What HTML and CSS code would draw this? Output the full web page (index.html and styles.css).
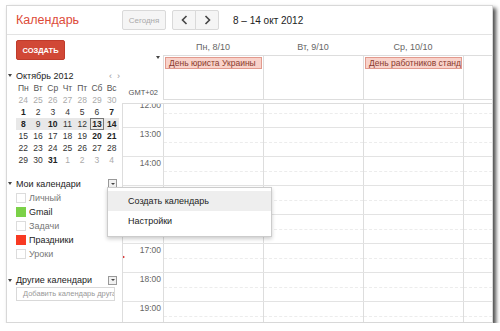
FILE: index.html
```html
<!DOCTYPE html>
<html lang="ru">
<head>
  <meta charset="UTF-8">
  <title>Календарь</title>
  <link rel="stylesheet" href="styles.css">
</head>
<body>
  <div class="window">
    <header class="topbar">
      <div class="brand">Календарь</div>
      <button class="btn today">Сегодня</button>
      <div class="nav">
        <button class="btn"><svg width="7" height="10" viewBox="0 0 7 10"><path d="M5.5 1 L1.5 5 L5.5 9" fill="none" stroke="#444" stroke-width="1.6"/></svg></button>
        <button class="btn"><svg width="7" height="10" viewBox="0 0 7 10"><path d="M1.5 1 L5.5 5 L1.5 9" fill="none" stroke="#444" stroke-width="1.6"/></svg></button>
      </div>
      <div class="range">8 – 14 окт 2012</div>
    </header>

    <div class="main">
      <aside class="sidebar">
        <button class="create">СОЗДАТЬ</button>

        <div class="mini-head">
          <span class="tri"></span>
          <span class="month">Октябрь 2012</span>
          <span class="arrows">‹ &nbsp;›</span>
        </div>
        <div class="mini-grid">
          <div class="dn">Пн</div><div class="dn">Вт</div><div class="dn">Ср</div><div class="dn">Чт</div><div class="dn">Пт</div><div class="dn">Сб</div><div class="dn">Вс</div>
          <div class="off">24</div><div class="off">25</div><div class="off">26</div><div class="off">27</div><div class="off">28</div><div class="off">29</div><div class="off">30</div>
          <div class="b">1</div><div>2</div><div>3</div><div>4</div><div>5</div><div>6</div><div class="b">7</div>
          <div class="wk b">8</div><div class="wk">9</div><div class="wk b">10</div><div class="wk">11</div><div class="wk">12</div><div class="wk b now">13</div><div class="wk b">14</div>
          <div>15</div><div>16</div><div>17</div><div>18</div><div>19</div><div class="b">20</div><div class="b">21</div>
          <div>22</div><div>23</div><div>24</div><div>25</div><div>26</div><div>27</div><div>28</div>
          <div>29</div><div>30</div><div class="b">31</div><div class="off">1</div><div class="off">2</div><div class="off">3</div><div class="off">4</div>
        </div>

        <div class="sec-head my">
          <span class="tri"></span>
          <span class="sec-title">Мои календари</span>
          <span class="dd"></span>
        </div>
        <ul class="cals">
          <li class="muted"><span class="box"></span>Личный</li>
          <li><span class="box green"></span>Gmail</li>
          <li class="muted"><span class="box"></span>Задачи</li>
          <li><span class="box red"></span>Праздники</li>
          <li class="muted"><span class="box"></span>Уроки</li>
        </ul>

        <div class="sec-head other">
          <span class="tri"></span>
          <span class="sec-title">Другие календари</span>
          <span class="dd"></span>
        </div>
        <div class="add">Добавить календарь друга</div>
      </aside>

      <section class="cal">
        <div class="dayhead">
          <div class="gut"></div>
          <div class="dl">Пн, 8/10</div>
          <div class="dl">Вт, 9/10</div>
          <div class="dl">Ср, 10/10</div>
          <div class="dl"></div>
        </div>
        <div class="allday">
          <div class="gut">
            <span class="tri"></span>
            <span class="tz">GMT+02</span>
          </div>
          <div class="cells">
            <div class="cell"><div class="chip">День юриста Украины</div></div>
            <div class="cell"></div>
            <div class="cell"><div class="chip">День работников стандартизации</div></div>
            <div class="cell"></div>
          </div>
        </div>
        <div class="scroll">
          <div class="hours">
            <div class="hour"><div class="t">12:00</div><div class="c"><i></i></div><div class="c"><i></i></div><div class="c"><i></i></div><div class="c"><i></i></div></div>
            <div class="hour"><div class="t">13:00</div><div class="c"><i></i></div><div class="c"><i></i></div><div class="c"><i></i></div><div class="c"><i></i></div></div>
            <div class="hour"><div class="t">14:00</div><div class="c"><i></i></div><div class="c"><i></i></div><div class="c"><i></i></div><div class="c"><i></i></div></div>
            <div class="hour"><div class="t"></div><div class="c"><i></i></div><div class="c"><i></i></div><div class="c"><i></i></div><div class="c"><i></i></div></div>
            <div class="hour"><div class="t"></div><div class="c"><i></i></div><div class="c"><i></i></div><div class="c"><i></i></div><div class="c"><i></i></div></div>
            <div class="hour"><span class="marker"></span><div class="t">17:00</div><div class="c"><i></i></div><div class="c"><i></i></div><div class="c"><i></i></div><div class="c"><i></i></div></div>
            <div class="hour"><div class="t">18:00</div><div class="c"><i></i></div><div class="c"><i></i></div><div class="c"><i></i></div><div class="c"><i></i></div></div>
            <div class="hour"><div class="t">19:00</div><div class="c"><i></i></div><div class="c"><i></i></div><div class="c"><i></i></div><div class="c"><i></i></div></div>
          </div>
        </div>
      </section>
    </div>

    <div class="menu">
      <div class="item active">Создать календарь</div>
      <div class="item">Настройки</div>
    </div>
  </div>
</body>
</html>
```

FILE: styles.css
```css
body {
  margin: 0;
  padding: 5px 0 0 6px;
  font-family: 'Liberation Sans', Arial, sans-serif;
  background: #fff;
  color: #333;
}

.window {
  position: relative;
  width: 487px;
  height: 318px;
  box-sizing: border-box;
  border: 1px solid #d8d8d8;
  background: #fff;
  box-shadow: 3px 3px 4px rgba(0, 0, 0, 0.7);
  display: flex;
  flex-direction: column;
  overflow: hidden;
}

/* top bar */
.topbar {
  display: flex;
  align-items: center;
  height: 28px;
  flex-shrink: 0;
  border-bottom: 1px solid #e3e3e3;
}

.brand {
  width: 115px;
  box-sizing: border-box;
  padding-left: 9px;
  font-size: 12.5px;
  color: #dd4b39;
}

.btn {
  height: 20px;
  margin: 0;
  padding: 0;
  border: 1px solid #d9d9d9;
  border-radius: 2px;
  background: #f5f5f5;
  font-family: inherit;
  display: flex;
  align-items: center;
  justify-content: center;
}

.today {
  width: 44px;
  font-size: 8px;
  color: #aaa;
}

.nav {
  display: flex;
  margin-left: 6px;
}

.nav .btn {
  width: 24px;
}

.nav .btn:first-child {
  border-radius: 2px 0 0 2px;
}

.nav .btn:last-child {
  border-radius: 0 2px 2px 0;
  margin-left: -1px;
}

.range {
  margin-left: 14px;
  font-size: 10px;
  color: #222;
}

.main {
  display: flex;
  flex: 1;
  min-height: 0;
}

/* sidebar */
.sidebar {
  width: 115px;
  flex-shrink: 0;
  font-size: 9px;
}

.create {
  display: block;
  width: 49px;
  height: 20px;
  margin: 5px 0 0 9px;
  padding: 0;
  border: 1px solid #c03b2b;
  border-radius: 2px;
  background: #d14836;
  color: #fff;
  font-family: inherit;
  font-size: 7.5px;
  font-weight: bold;
}

.tri {
  display: inline-block;
  width: 0;
  height: 0;
  border-left: 2.5px solid transparent;
  border-right: 2.5px solid transparent;
  border-top: 3px solid #444;
}

.mini-head {
  display: flex;
  align-items: center;
  height: 13px;
  margin-top: 9px;
  padding-left: 1px;
}

.mini-head .month {
  margin-left: 4px;
  font-size: 9px;
  color: #222;
}

.mini-head .arrows {
  margin-left: auto;
  margin-right: 2px;
  color: #999;
  font-size: 9px;
}

.mini-grid {
  display: grid;
  grid-template-columns: repeat(7, 1fr);
  width: 103px;
  margin-left: 9px;
  font-size: 8.5px;
}

.mini-grid div {
  height: 12px;
  line-height: 12px;
  text-align: center;
  color: #333;
  box-sizing: border-box;
}

.mini-grid .dn {
  color: #555;
}

.mini-grid .off {
  color: #aaa;
}

.mini-grid .b {
  font-weight: bold;
  color: #222;
}

.mini-grid .wk {
  background: #e8e8e8;
}

.mini-grid .now {
  border: 1px solid #777;
  line-height: 10px;
}

.sec-head {
  display: flex;
  align-items: center;
  height: 15px;
  padding-left: 1px;
  padding-right: 5px;
}

.sec-head.my {
  margin-top: 10px;
}

.sec-head.other {
  margin-top: 12px;
  height: 14px;
}

.sec-title {
  margin-left: 4px;
  font-size: 9px;
  color: #222;
}

.dd {
  margin-left: auto;
  width: 7px;
  height: 7px;
  border: 1px solid #999;
  background: #f1f1f1;
  display: flex;
  align-items: center;
  justify-content: center;
}

.dd::after {
  content: "";
  border-left: 2px solid transparent;
  border-right: 2px solid transparent;
  border-top: 2.5px solid #444;
}

.cals {
  list-style: none;
  margin: 0;
  padding: 0 0 0 9px;
}

.cals li {
  display: flex;
  align-items: center;
  height: 14px;
  font-size: 9px;
  color: #222;
}

.cals li.muted {
  color: #777;
}

.box {
  width: 8px;
  height: 8px;
  margin-right: 3px;
  border: 1px solid #dcdcdc;
  background: #fff;
}

.box.green {
  background: #7bd148;
  border-color: #7bd148;
}

.box.red {
  background: #f83a22;
  border-color: #f83a22;
}

.add {
  width: 99px;
  height: 14px;
  margin-left: 9px;
  box-sizing: border-box;
  border: 1px solid #d9d9d9;
  padding-left: 6px;
  font-size: 7.5px;
  line-height: 12px;
  color: #999;
  white-space: nowrap;
  overflow: hidden;
}

/* calendar grid */
.cal {
  flex: 1;
  min-width: 0;
  display: flex;
  flex-direction: column;
  overflow: hidden;
}

.gut {
  width: 41px;
  flex-shrink: 0;
  box-sizing: border-box;
}

.dayhead {
  display: flex;
  height: 20px;
  flex-shrink: 0;
}

.dl {
  width: 100px;
  flex-shrink: 0;
  padding-top: 7px;
  text-align: center;
  font-size: 9px;
  line-height: 11px;
  color: #666;
}

.allday {
  display: flex;
  height: 45px;
  flex-shrink: 0;
}

.allday .gut {
  display: flex;
  flex-direction: column;
  justify-content: space-between;
  align-items: flex-end;
  padding: 1px 3px 3px 0;
}

.tz {
  font-size: 7.5px;
  color: #555;
  padding-right: 2px;
}

.cells {
  display: flex;
  border-top: 1px solid #ddd;
  border-bottom: 1px solid #ddd;
  border-left: 1px solid #ddd;
}

.cell {
  width: 100px;
  flex-shrink: 0;
  box-sizing: border-box;
  border-right: 1px solid #ddd;
  padding: 1px 1px 0 1px;
}

.chip {
  height: 12px;
  box-sizing: border-box;
  border: 1px solid #e29a8d;
  background: #f9d2ca;
  padding-left: 3px;
  font-size: 8.5px;
  line-height: 10px;
  color: #8a3a2c;
  white-space: nowrap;
  overflow: hidden;
}

.scroll {
  flex: 1;
  margin-top: 3px;
  border-top: 1px solid #ddd;
  border-left: 1px solid #ddd;
  overflow: hidden;
}

.hours {
  margin-top: -6px;
}

.hour {
  position: relative;
  display: flex;
  height: 29px;
  box-sizing: border-box;
  border-top: 1px solid #e3e3e3;
}

.hour .t {
  width: 40px;
  flex-shrink: 0;
  box-sizing: border-box;
  padding: 1px 2px 0 0;
  text-align: right;
  font-size: 8.5px;
  line-height: 10px;
  color: #666;
}

.hour .c {
  width: 100px;
  flex-shrink: 0;
  box-sizing: border-box;
  border-left: 1px solid #ddd;
}

.hour .c i {
  display: block;
  height: 14px;
  border-bottom: 1px dashed #ececec;
}

.marker {
  position: absolute;
  left: -1px;
  top: 11px;
  border-top: 2px solid transparent;
  border-bottom: 2px solid transparent;
  border-left: 3px solid #d42020;
}

/* dropdown */
.menu {
  position: absolute;
  left: 100px;
  top: 181px;
  width: 165px;
  box-sizing: border-box;
  padding: 3px 0 5px;
  background: #fff;
  border: 1px solid rgba(0, 0, 0, 0.2);
  box-shadow: 0 2px 4px rgba(0, 0, 0, 0.2);
}

.menu .item {
  height: 20px;
  line-height: 20px;
  padding-left: 20px;
  font-size: 9px;
  color: #222;
}

.menu .item.active {
  background: #eee;
}
```
